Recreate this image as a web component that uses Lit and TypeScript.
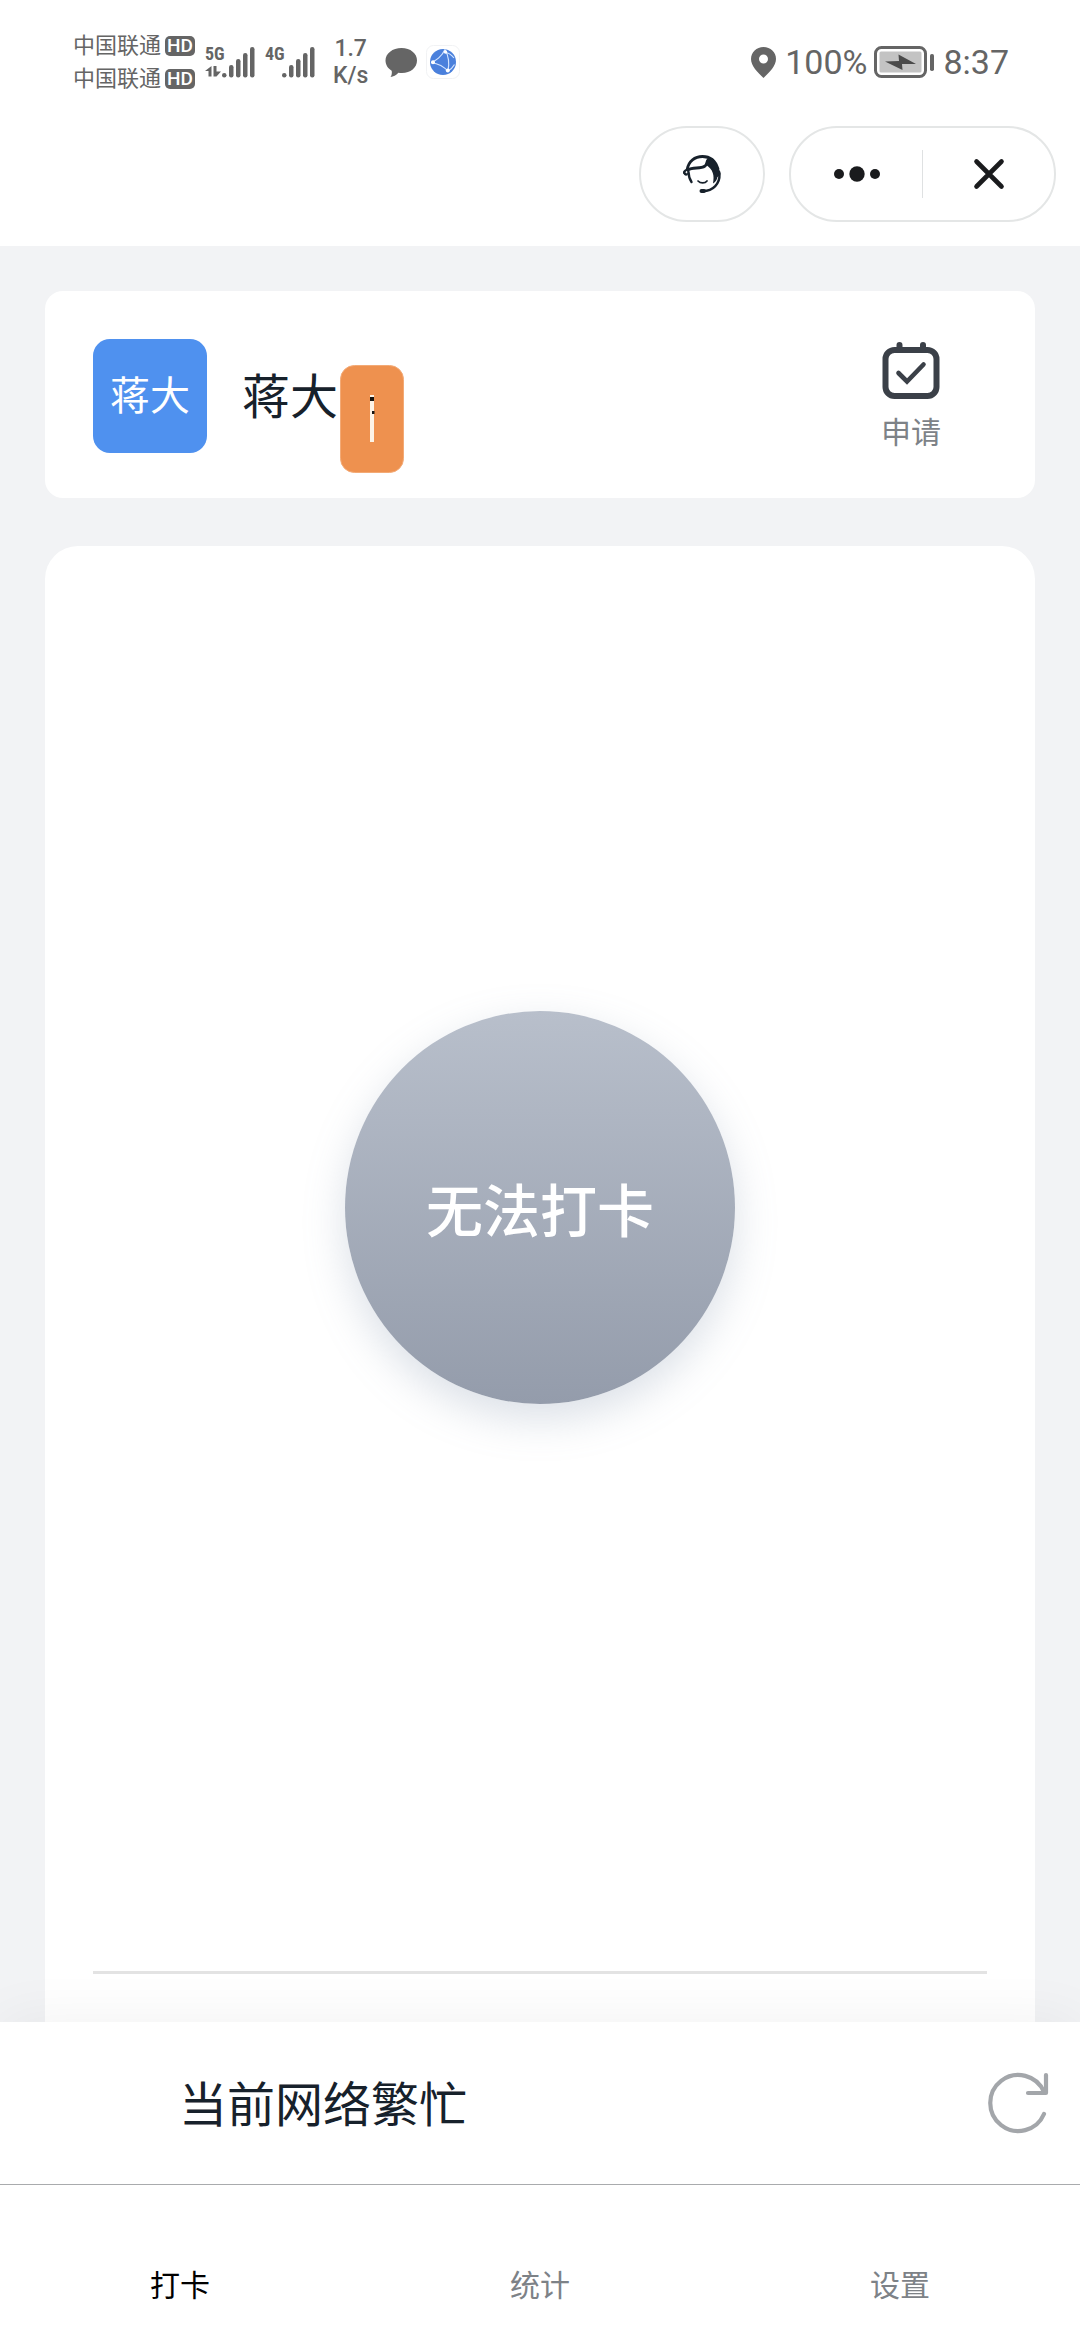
import { LitElement, html, css, svg } from "lit";
import { customElement, property, state } from "lit/decorators.js";
import { classMap } from "lit/directives/class-map.js";

@customElement("signal-meter")
class SignalMeter extends LitElement {
  @property() label = "";
  @property({ type: Boolean }) active = false;

  static styles = css`
    :host { display: flex; align-items: flex-start; }
    .left { display: flex; flex-direction: column; width: 17px; height: 30px; justify-content: space-between; }
    .label { font: 700 18px/14px "Liberation Sans Narrow", "Roboto Condensed", Roboto, sans-serif; white-space: nowrap; }
    svg { display: block; }
  `;

  render() {
    return html`
      <div class="left">
        <span class="label">${this.label}</span>
        ${this.active
          ? html`<svg width="16" height="11" viewBox="0 0 16 11" fill="currentColor" aria-hidden="true">
              <path d="M6.500 0v10.500h-3V5H0zM8.500 0h3v5.500H16L11.500 10.500H8.500z" />
            </svg>`
          : null}
      </div>
      <svg width="33" height="31" viewBox="0 0 33 31" fill="currentColor" aria-hidden="true">
        ${[26, 18, 12, 6, 0].map(
          (y, i) => svg`<rect x=${i * 7} y=${y} width="4.500" height=${30.5 - y} rx="2.200" />`
        )}
      </svg>
    `;
  }
}

@customElement("status-bar")
class StatusBar extends LitElement {
  static styles = css`
    :host {
      display: flex;
      align-items: center;
      justify-content: space-between;
      height: 64px;
      padding: 30px 71px 0 73px;
      color: #656565;
      font-family: Roboto, "Noto Sans CJK SC", sans-serif;
    }
    .group { display: flex; align-items: center; }
    .carriers { display: flex; flex-direction: column; gap: 1px; }
    .carrier { display: flex; align-items: center; gap: 4px; font-size: 22px; line-height: 32px; }
    .hd {
      box-sizing: border-box;
      width: 30px;
      height: 20px;
      border-radius: 5px;
      background: #656565;
      color: #fff;
      font-size: 19px;
      font-weight: 500;
      line-height: 20px;
      text-align: center;
    }
    .first { margin-left: 10px; }
    .second { margin-left: 10px; }
    .rate { margin-left: 18px; font-size: 23px; font-weight: 500; line-height: 27px; text-align: center; }
    .chat { margin-left: 17px; }
    .globe { margin-left: 8px; }
    .right { font-size: 34px; line-height: 40px; }
    .pin { margin-right: 9px; }
    .battery { margin: 0 9px 0 7px; }
    svg { display: block; }
  `;

  render() {
    return html`
      <div class="group">
        <div class="carriers">
          ${[0, 1].map(() => html`<div class="carrier"><span>中国联通</span><span class="hd">HD</span></div>`)}
        </div>
        <signal-meter class="first" label="5G" active></signal-meter>
        <signal-meter class="second" label="4G"></signal-meter>
        <div class="rate">1.7<br />K/s</div>
        <svg class="chat" width="33" height="31" viewBox="0 0 33 31" fill="currentColor" aria-hidden="true">
          <path d="M16.500 1C25.500 1 32 6.500 32 13.500S25.500 26 17 26c-1.300 0-2.500 0-3.600-.3C11 28.300 8.500 29.500 5.500 30c1.200-1.700 1.600-3.500 1.200-6.200C3 21.500.5 17.800.5 13.500.5 6.500 7.500 1 16.500 1z" />
        </svg>
        <svg class="globe" width="34" height="34" viewBox="0 0 34 34" fill="none" aria-hidden="true">
          <rect x=".5" y=".5" width="33" height="33" rx="7" fill="#fff" stroke="#f1f2f4" />
          <circle cx="17" cy="17" r="13" fill="#4a80dc" />
          <g stroke="#d3e4ff" stroke-width="1.200">
            <path d="M5 17.500C10 16 16 11 19 4.500M5 17.500c7 1 13 4 17 9M19 4.500c4 7 4.500 14 3 22M19 7c4 1 7 3.500 9 6M22 26c3-1.500 5-4 6.500-6.500" />
          </g>
          <g fill="#fff"><circle cx="7" cy="17.300" r="2" /><circle cx="19.500" cy="7" r="1.700" /><circle cx="21.800" cy="25.500" r="2" /></g>
        </svg>
      </div>
      <div class="group right">
        <svg class="pin" width="25" height="31" viewBox="0 0 25 31" aria-hidden="true">
          <path fill="currentColor" fill-rule="evenodd" d="M12.500 0C19.500 0 25 5.200 25 12c0 7-6.500 13-12.500 19C6.500 25 0 19 0 12 0 5.200 5.500 0 12.500 0zm0 7.500a4.500 4.500 0 1 0 0 9 4.500 4.500 0 0 0 0-9z" />
        </svg>
        <span>100%</span>
        <svg class="battery" width="60" height="32" viewBox="0 0 60 32" aria-hidden="true">
          <rect x="1.500" y="1.500" width="50" height="29" rx="6" fill="#fff" stroke="#656565" stroke-width="3" />
          <rect x="5.500" y="5.500" width="42" height="21" rx="1.500" fill="#c3c3c3" />
          <path d="M11 15.500L25 15 24.500 8.500 42 18 28 18 28.500 24z" fill="#4a4a4a" />
          <rect x="56" y="8" width="4" height="17" rx="1.800" fill="#656565" />
        </svg>
        <span>8:37</span>
      </div>
    `;
  }
}

@customElement("app-root")
class AppRoot extends LitElement {
  @state() private tab = 0;
  private tabs = ["打卡", "统计", "设置"];

  static styles = css`
    :host {
      display: flex;
      flex-direction: column;
      min-height: 100vh;
      background: #f2f3f5;
      color: #17212b;
      font-family: "Noto Sans CJK SC", "Noto Sans", sans-serif;
    }
    button {
      padding: 0;
      border: 0;
      background: none;
      color: inherit;
      font: inherit;
      cursor: pointer;
    }
    svg { display: block; }
    .top { background: #fff; }
    .actions { display: flex; justify-content: flex-end; gap: 24px; padding: 32px 24px 24px; }
    .pill {
      box-sizing: border-box;
      display: flex;
      align-items: center;
      height: 96px;
      border: 2px solid #e4e6e6;
      border-radius: 48px;
      background: #fff;
    }
    .service { width: 126px; justify-content: center; }
    .menu { width: 267px; }
    .menu button { display: flex; flex: 1; align-items: center; justify-content: center; height: 100%; }
    .split { width: 1px; height: 48px; background: #dfe1e2; }
    .content { display: flex; flex: 1; flex-direction: column; gap: 48px; padding: 45px 45px 0; }
    .profile {
      display: flex;
      align-items: flex-start;
      padding: 48px 48px 45px;
      border-radius: 18px;
      background: #fff;
    }
    .avatar {
      width: 114px;
      height: 114px;
      border-radius: 17px;
      background: #4f91ef;
      color: #fff;
      font-size: 40px;
      line-height: 108px;
      text-align: center;
    }
    .name { position: relative; flex: 1; margin-left: 35px; font-size: 48px; line-height: 108px; }
    .mark { position: absolute; left: 98px; top: 26px; }
    .apply {
      display: flex;
      flex-direction: column;
      align-items: center;
      gap: 10px;
      margin: 2px 46px 0 0;
      color: #7d8287;
      font-size: 30px;
      line-height: 42px;
    }
    .punch {
      display: flex;
      flex: 1;
      flex-direction: column;
      padding: 0 48px 48px;
      border-radius: 33px 33px 0 0;
      background: #fff;
    }
    .stage {
      display: flex;
      flex: 1;
      align-items: center;
      justify-content: center;
      padding-bottom: 102px;
      border-bottom: 3px solid #e3e3e3;
    }
    .disc {
      width: 390px;
      height: 393px;
      padding-bottom: 2px;
      border-radius: 50%;
      background: linear-gradient(#b8bfcb, #949cab);
      box-shadow: 0 15px 42px rgba(125, 145, 170, 0.28);
      color: #fff;
      font-size: 57px;
      font-weight: 500;
    }
    .notice {
      display: flex;
      align-items: center;
      justify-content: space-between;
      height: 162px;
      padding: 0 31px 0 179px;
      border-bottom: 1px solid #a9abad;
      background: #fff;
      box-shadow: 0 0 60px rgba(0, 0, 0, 0.06);
      clip-path: inset(-90px 0 0 0);
      font-size: 48px;
      line-height: 72px;
    }
    .notice span { padding-bottom: 4px; }
    .tabs { display: flex; background: #fff; }
    .tab {
      flex: 1;
      padding: 76px 0 34px;
      color: #7d8287;
      font-size: 30px;
      line-height: 45px;
    }
    .tab.current { color: #000; }
  `;

  render() {
    return html`
      <header class="top">
        <status-bar></status-bar>
        <div class="actions">
          <button class="pill service" aria-label="客服">
            <svg width="40" height="40" viewBox="0 0 40 40" fill="none" stroke="#17212b" stroke-linecap="round" aria-hidden="true">
              <path d="M5 16C6.500 7 13 2.500 20.500 2.500S33.500 7 36 15" stroke-width="2.800" />
              <path d="M6 16c5-3.500 12-.5 17-4 1.500-1 1.500-3 2.500-5" stroke-width="2.800" />
              <path d="M25 4.500c5 0 8.500 3.500 10 7.500l3.500 6c.3 2.500-1 4.500-3 5-.5 3-2 5-4.500 6.500 1.500-8 .5-14-7.500-19z" fill="#17212b" stroke="none" />
              <path d="M5 15.500c-2.500 0-4 1.500-3.500 3.500s2 2.500 3.500 2z" fill="#17212b" stroke="#17212b" />
              <circle cx="4.500" cy="18.200" r=".6" fill="#fff" stroke="#fff" />
              <path d="M6.500 18c.2 4.500 1.200 7.500 3 10" stroke-width="2.400" />
              <path d="M16 27c2.500 2.600 7 2.600 9 0" stroke-width="1.700" />
              <path d="M37.500 20c.5 9-6 17.500-17.500 17" stroke-width="2.400" />
              <path d="M19.500 37h2.500" stroke-width="4" />
            </svg>
          </button>
          <div class="pill menu">
            <button aria-label="更多">
              <svg width="46" height="16" viewBox="0 0 46 16" fill="#1a1b1d" aria-hidden="true">
                <circle cx="5" cy="8" r="5" /><circle cx="23" cy="8" r="7.700" /><circle cx="41" cy="8" r="5" />
              </svg>
            </button>
            <span class="split"></span>
            <button aria-label="关闭">
              <svg width="32" height="32" viewBox="0 0 32 32" stroke="#1a1b1d" stroke-width="4.600" stroke-linecap="round" aria-hidden="true">
                <path d="M3.500 3.500l25 25M28.500 3.500l-25 25" />
              </svg>
            </button>
          </div>
        </div>
      </header>

      <main class="content">
        <section class="profile">
          <div class="avatar">蒋大</div>
          <div class="name">
            蒋大
            <svg class="mark" width="64" height="108" viewBox="0 0 64 108" aria-hidden="true">
              <rect x=".5" y=".5" width="63" height="107" rx="14" fill="#ee914f" stroke="#f3aa76" />
              <path d="M32 30v47" stroke="#fdf3e6" stroke-width="4" />
              <path d="M30 32h4v4h-4zM32 46h2.500v3H32z" fill="#17130f" />
            </svg>
          </div>
          <button class="apply">
            <svg width="58" height="58" viewBox="0 0 58 58" fill="none" stroke="#3b4048" stroke-linecap="round" aria-hidden="true">
              <rect x="3.500" y="9" width="51" height="46" rx="9" stroke-width="6" />
              <path d="M17.500 4v5M41 4v5" stroke-width="6" />
              <path d="M16.500 32l8.500 8.500 16.500-17" stroke-width="4.600" />
            </svg>
            申请
          </button>
        </section>

        <section class="punch">
          <div class="stage"><button class="disc">无法打卡</button></div>
        </section>
      </main>

      <div class="notice">
        <span>当前网络繁忙</span>
        <button aria-label="刷新">
          <svg width="62" height="62" viewBox="0 0 62 62" fill="none" stroke="#a3a6aa" stroke-width="4.200" stroke-linecap="round" stroke-linejoin="round" aria-hidden="true">
            <path d="M57 42A28 28 0 1 1 57 20M59 3v18H41" />
          </svg>
        </button>
      </div>
      <nav class="tabs">
        ${this.tabs.map(
          (name, i) => html`<button
            class=${classMap({ tab: true, current: i === this.tab })}
            @click=${() => (this.tab = i)}
          >${name}</button>`
        )}
      </nav>
    `;
  }
}
